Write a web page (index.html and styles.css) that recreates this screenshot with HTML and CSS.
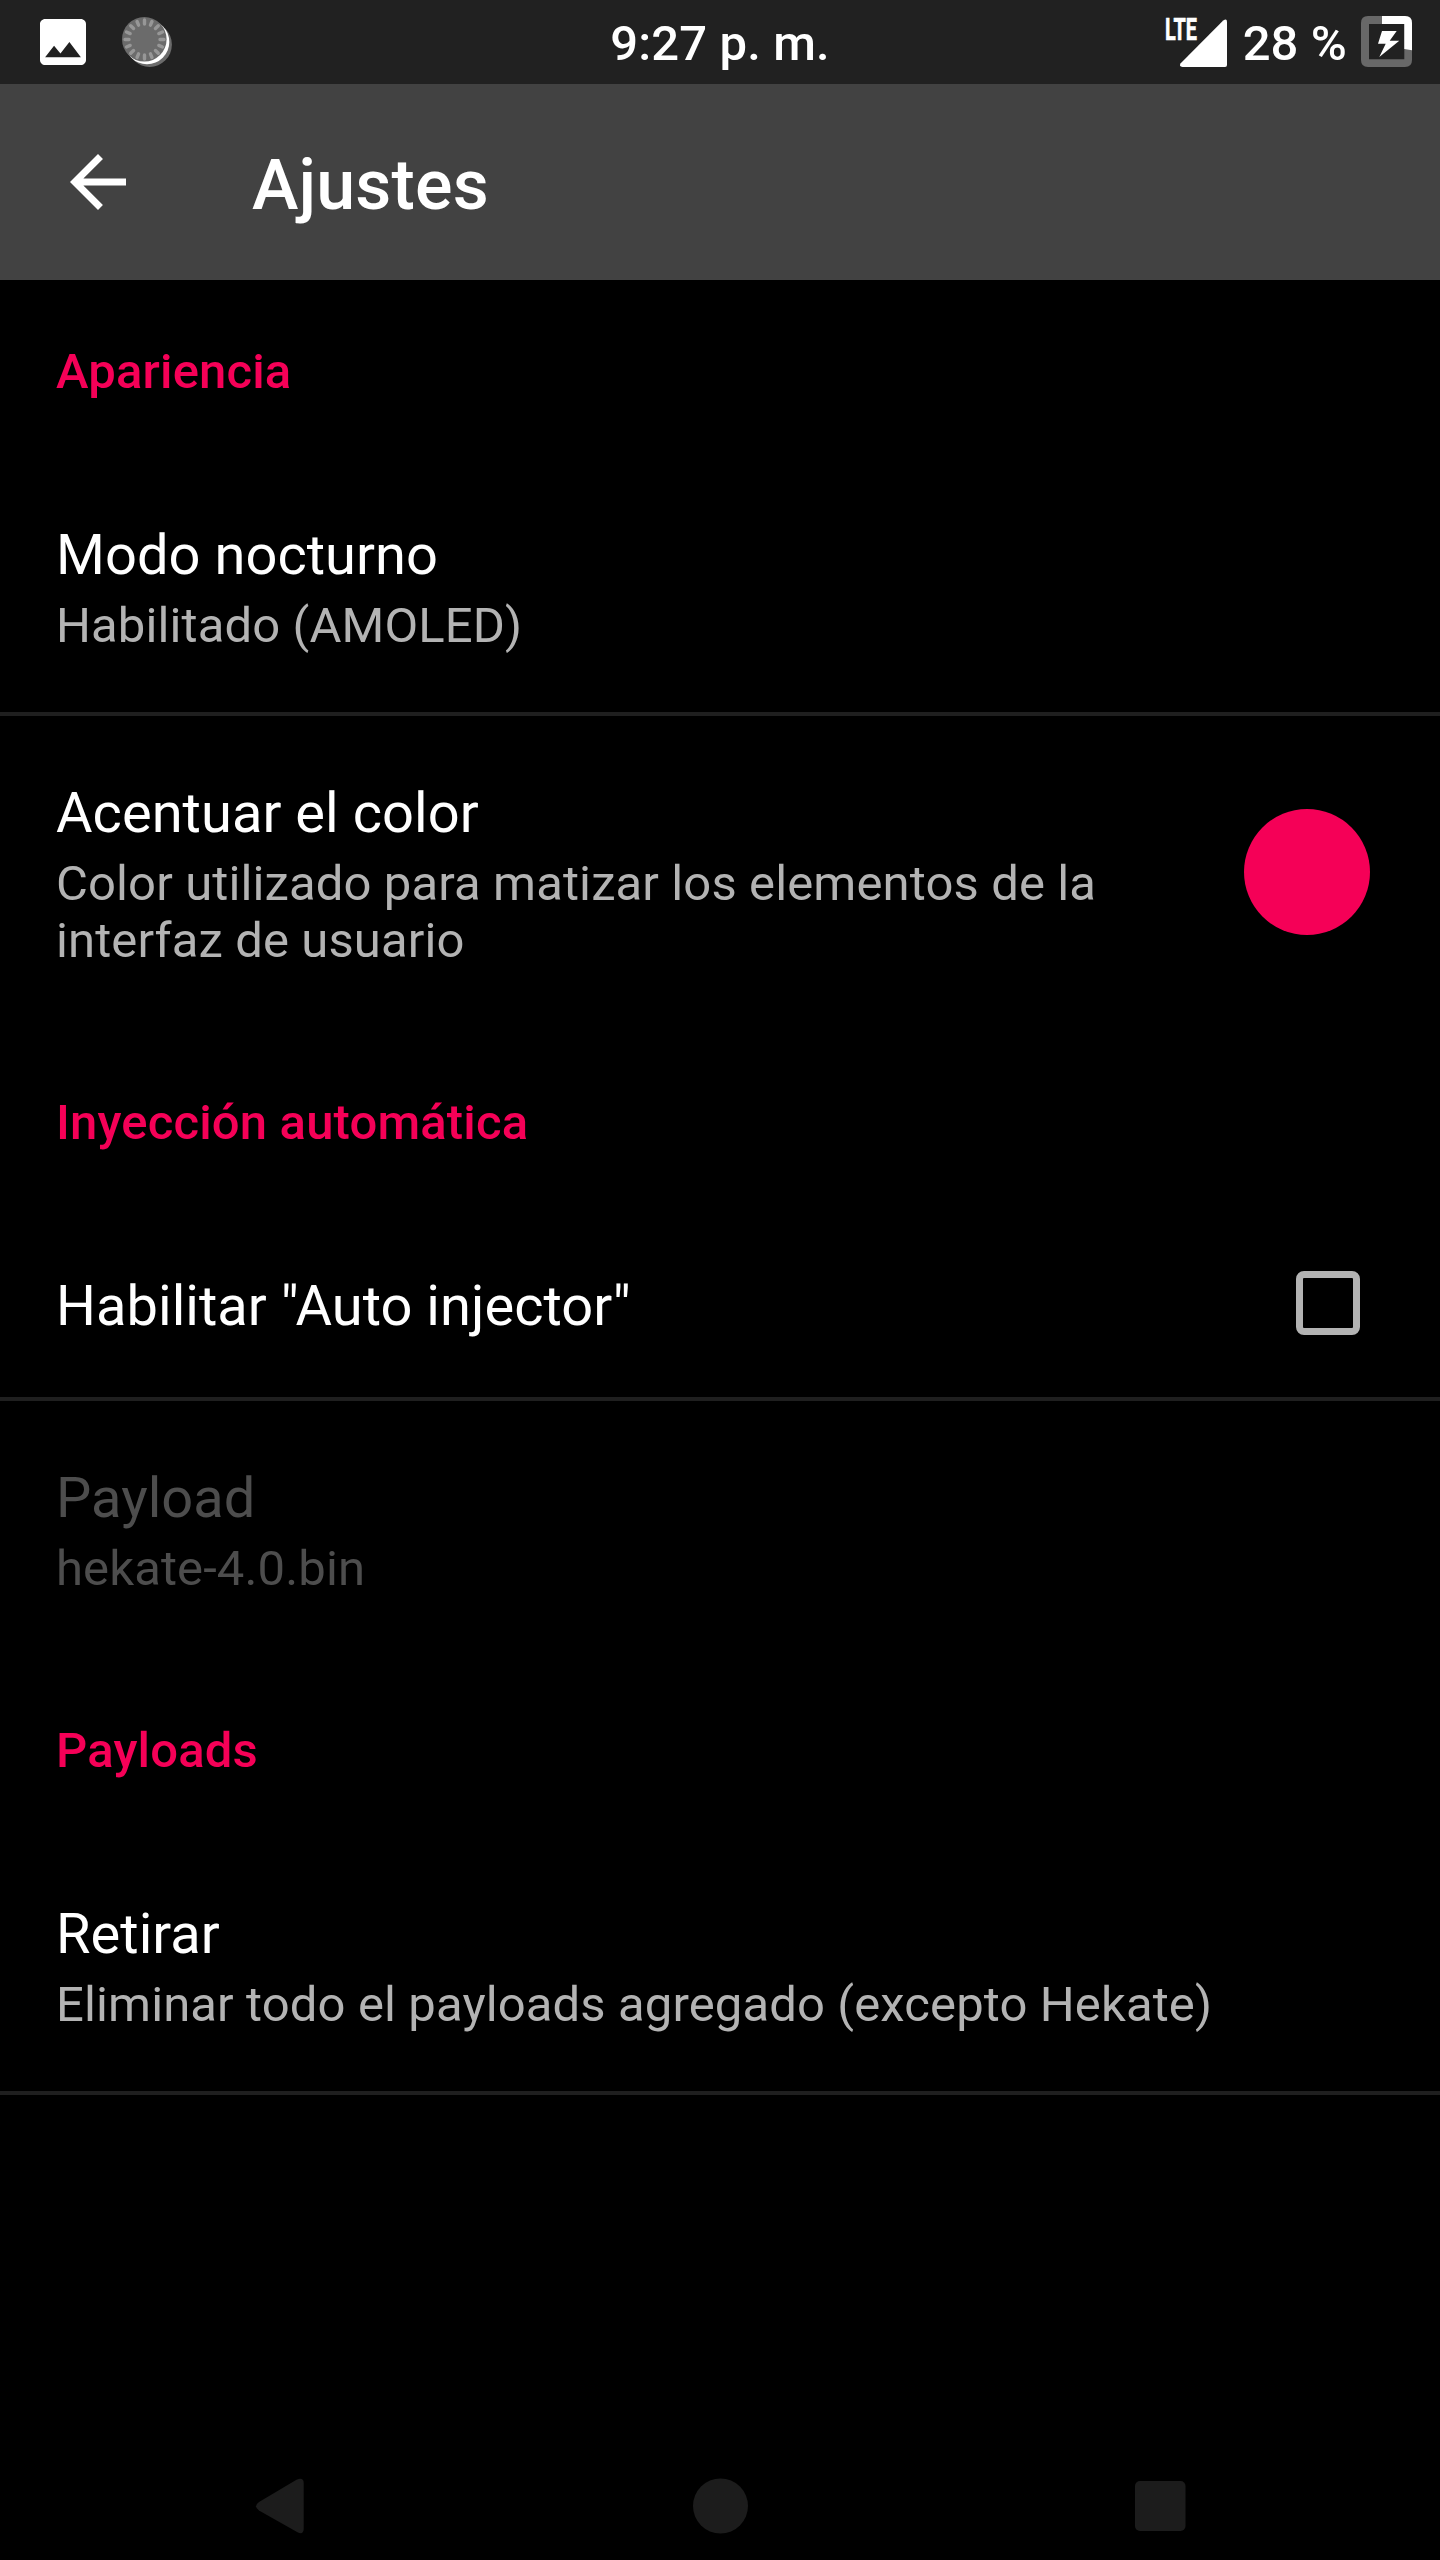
FILE: index.html
```
<!DOCTYPE html>
<html lang="es">
<head>
    <meta charset="UTF-8">
    <meta name="viewport" content="width=device-width, initial-scale=1.0">
    <title>Ajustes</title>
    <link rel="stylesheet" href="styles.css">
</head>
<body>

<div class="status-bar">
    <div class="status-left">
        <svg width="46" height="46" viewBox="3 3 18 18">
            <path fill="#fff" d="M21 19V5c0-1.1-.9-2-2-2H5c-1.1 0-2 .9-2 2v14c0 1.1.9 2 2 2h14c1.1 0 2-.9 2-2zM8.5 13.5l2.5 3.01L14.5 12l4.5 6H5l3.5-4.5z"/>
        </svg>
        <svg width="50" height="50" viewBox="0 0 50 50">
            <circle cx="27.6" cy="27.6" r="22.3" fill="#6b6b6b"/>
            <circle cx="25" cy="25" r="22.3" fill="#fff"/>
            <circle cx="22.3" cy="22.3" r="22.3" fill="#6b6b6b"/>
            <g transform="translate(22.5 22.5)" stroke="#979797" stroke-width="3.4" stroke-linecap="round" fill="none">
                <path id="ticks" d="M0 -19.5v4M0 19.5v-4M-19.5 0h4M19.5 0h-4"/>
                <use href="#ticks" transform="rotate(22.5)"/>
                <use href="#ticks" transform="rotate(45)"/>
                <use href="#ticks" transform="rotate(67.5)"/>
            </g>
        </svg>
    </div>
    <span class="clock">9:27 p. m.</span>
    <div class="status-right">
        <svg width="64" height="68" viewBox="-1 -8 64 68">
            <text class="lte" x="0" y="24" textLength="32" lengthAdjust="spacingAndGlyphs">LTE</text>
            <path fill="#fff" d="M58.2 4.6Q62 2 62 6V49Q62 51 60 51H17.500Q13.500 50.500 15.700 47.300Z"/>
        </svg>
        <span class="battery-text">28 %</span>
        <svg width="52" height="52" viewBox="0 0 52 52">
            <path fill="#686868" fill-rule="evenodd" d="M7 0H44Q51 0 51 7V44Q51 51 44 51H7Q0 51 0 44V7Q0 0 7 0ZM8 8V43.300H43.300V8Z"/>
            <path fill="#fff" d="M21 0H44Q51 0 51 7V34.300L43.300 33V8H21Z"/>
            <path fill="#fff" d="M21 15H35.700L28.700 24.700H38.300L18.300 41L24.700 27.700H17Z"/>
        </svg>
    </div>
</div>

<header class="toolbar">
    <svg width="84" height="84" viewBox="0 0 24 24">
        <path fill="#fff" d="M20 11H7.830l5.590-5.590L12 4l-8 8 8 8 1.410-1.410L7.830 13H20v-2z"/>
    </svg>
    <h1>Ajustes</h1>
</header>

<main>
    <section>
        <h2>Apariencia</h2>
        <div class="item">
            <div class="item-text">
                <p class="title">Modo nocturno</p>
                <p class="summary">Habilitado (AMOLED)</p>
            </div>
        </div>
        <div class="item no-line">
            <div class="item-text">
                <p class="title">Acentuar el color</p>
                <p class="summary">Color utilizado para matizar los elementos de la interfaz de usuario</p>
            </div>
            <span class="color-dot"></span>
        </div>
    </section>

    <section>
        <h2>Inyección automática</h2>
        <div class="item">
            <div class="item-text">
                <p class="title">Habilitar "Auto injector"</p>
            </div>
            <span class="checkbox"></span>
        </div>
        <div class="item no-line disabled">
            <div class="item-text">
                <p class="title">Payload</p>
                <p class="summary">hekate-4.0.bin</p>
            </div>
        </div>
    </section>

    <section>
        <h2>Payloads</h2>
        <div class="item">
            <div class="item-text">
                <p class="title">Retirar</p>
                <p class="summary">Eliminar todo el payloads agregado (excepto Hekate)</p>
            </div>
        </div>
    </section>
</main>

<!-- Android navigation buttons -->
<nav class="nav-bar">
    <svg width="56" height="56" viewBox="0 0 56 56">
        <path fill="#1c1c1c" d="M44.500 1.700Q51.500 -1 51.700 5V51Q51.500 57 45.500 54.300L7 32.500Q1 28.300 7 24Z"/>
    </svg>
    <svg width="56" height="56" viewBox="0 0 56 56">
        <circle cx="28.500" cy="28" r="27.500" fill="#1c1c1c"/>
    </svg>
    <svg width="56" height="56" viewBox="0 0 56 56">
        <rect x="3" y="3" width="50.500" height="50" rx="5" fill="#1c1c1c"/>
    </svg>
</nav>

</body>
</html>
```
FILE: styles.css
```
* {
    box-sizing: border-box;
}
body {
    font-family: Roboto, sans-serif;
    margin: 0;
    height: 2560px;
    display: flex;
    flex-direction: column;
    background-color: #000;
    color: #fff;
}
svg {
    display: block;
    flex-shrink: 0;
}
h1, h2, p {
    margin: 0;
}
.status-bar {
    display: grid;
    grid-template-columns: 1fr auto 1fr;
    align-items: center;
    height: 84px;
    padding: 0 27px 0 40px;
    background-color: #212121;
    font-size: 49px;
    font-weight: 500;
    line-height: 57px;
    letter-spacing: 0.1px;
}
.status-left {
    display: flex;
    align-items: center;
    gap: 36px;
}
.clock {
    margin: 3px 13px 0 0;
}
.status-right {
    display: flex;
    align-items: center;
    justify-content: flex-end;
}
.battery-text {
    margin: 3px 14px 0 15px;
}
.lte {
    font-size: 31px;
    font-weight: 700;
    letter-spacing: 0;
    fill: #fff;
    stroke: #fff;
    stroke-width: 0.6px;
}
.toolbar {
    display: flex;
    align-items: center;
    gap: 112px;
    height: 196px;
    padding-left: 56px;
    background-color: #424242;
}
.toolbar h1 {
    font-size: 70px;
    font-weight: 500;
    line-height: 82px;
    letter-spacing: 0.15px;
    padding-top: 6px;
}
main {
    flex: 1;
}
h2 {
    height: 178px;
    padding: 63px 56px 0;
    color: #f50057; /* Accent color */
    font-size: 49px;
    font-weight: 500;
    line-height: 57px;
    letter-spacing: 0.16px;
}
.item {
    display: flex;
    align-items: center;
    padding: 64px 70px 58px 56px;
    border-bottom: 4px solid #1f1f1f;
}
.no-line {
    border-bottom-color: transparent;
}
.item-text {
    flex: 1;
}
.title {
    font-size: 56px;
    line-height: 66px;
    letter-spacing: 0.04px;
}
.summary {
    margin-top: 9px;
    color: #b3b3b3;
    font-size: 49px;
    line-height: 57px;
    letter-spacing: 0.12px;
}
.disabled .title,
.disabled .summary {
    color: #4d4d4d;
}
.color-dot {
    width: 126px;
    height: 126px;
    margin: -26px 0 -20px 56px;
    border-radius: 50%;
    background-color: #f50057;
}
.checkbox {
    width: 64px;
    height: 64px;
    margin: -6px 10px 0 0;
    border: 7px solid #b3b3b3;
    border-radius: 8px;
}
.nav-bar {
    display: grid;
    grid-template-columns: repeat(3, 440px);
    justify-content: center;
    justify-items: center;
    align-items: center;
    height: 108px;
}
```
